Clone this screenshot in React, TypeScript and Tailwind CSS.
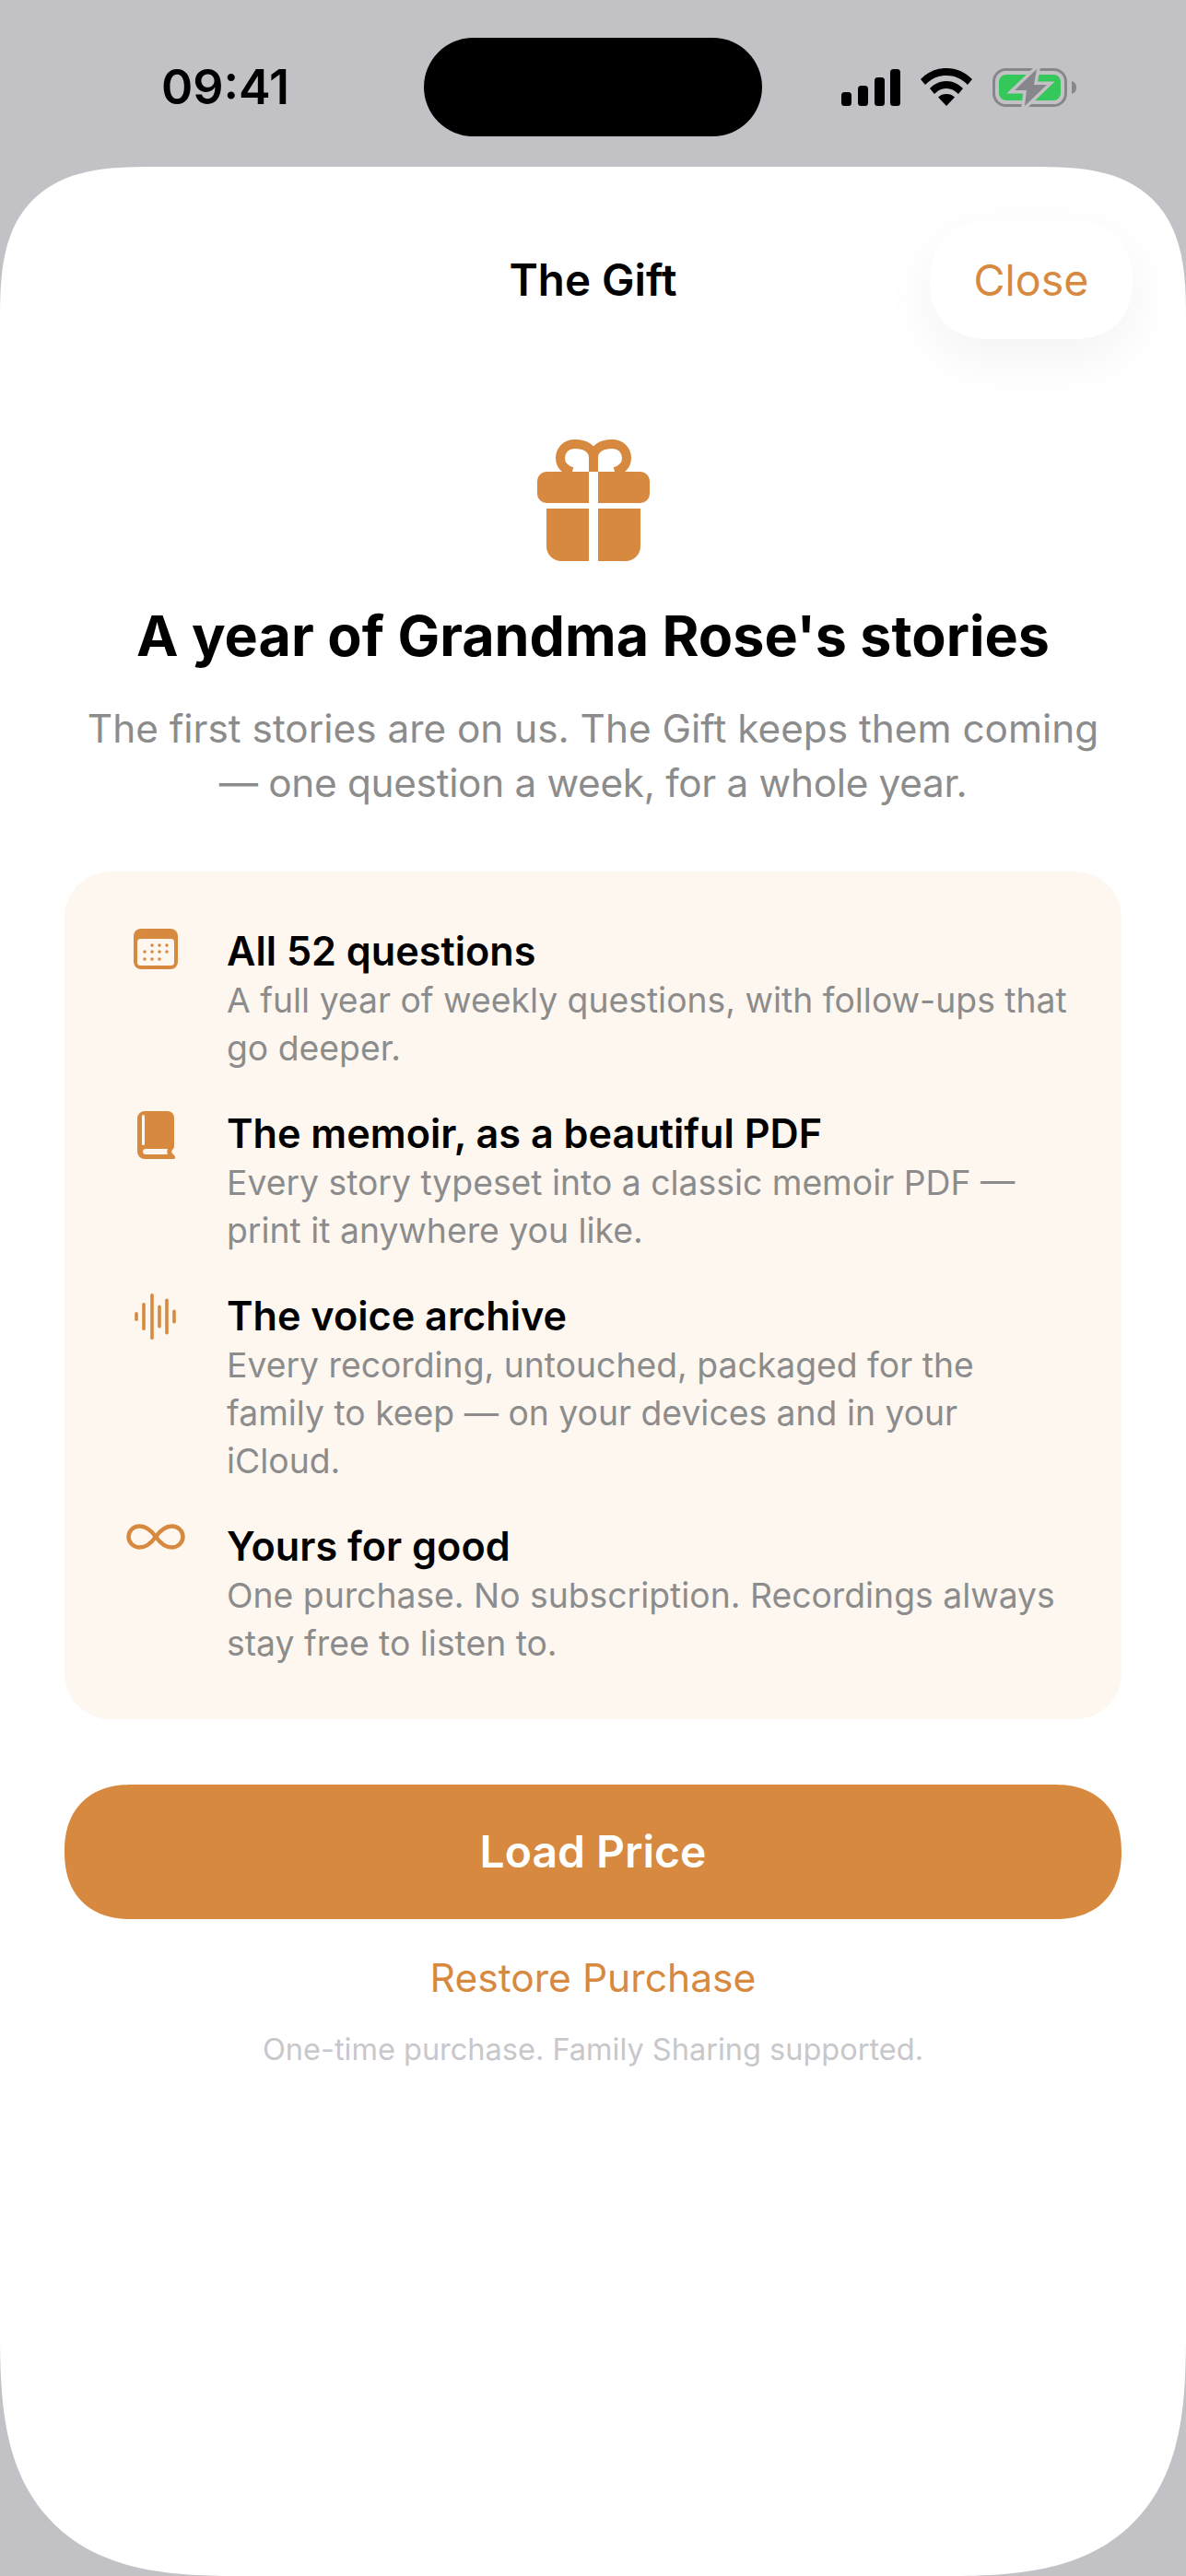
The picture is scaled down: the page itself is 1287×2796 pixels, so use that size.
const orange = '#d78a3f';

const features = [
  { icon: 'calendar', title: 'All 52 questions', lines: ['A full year of weekly questions, with follow-ups that', 'go deeper.'] },
  { icon: 'book', title: 'The memoir, as a beautiful PDF', lines: ['Every story typeset into a classic memoir PDF —', 'print it anywhere you like.'] },
  { icon: 'wave', title: 'The voice archive', lines: ['Every recording, untouched, packaged for the', 'family to keep — on your devices and in your', 'iCloud.'] },
  { icon: 'infinity', title: 'Yours for good', lines: ['One purchase. No subscription. Recordings always', 'stay free to listen to.'] },
];

function CalendarIcon() {
  const dots = [[20, 18], [28, 18], [36, 18], [12, 25], [20, 25], [28, 25], [36, 25], [12, 33], [20, 33], [28, 33]];
  return (
    <svg width="48" height="44" viewBox="0 0 48 44">
      <rect width="48" height="44" rx="8" fill={orange} />
      <rect x="4" y="11" width="40" height="29" rx="3.5" fill="#fef7f0" />
      {dots.map(([x, y]) => (
        <circle key={`${x}-${y}`} cx={x} cy={y} r="1.8" fill={orange} />
      ))}
    </svg>
  );
}

function BookIcon() {
  return (
    <svg width="41" height="52" viewBox="0 0 41 52">
      <path d="M8 0H33a7 7 0 0 1 7 7V38c0 2-1 3-2 4-1 1.500-1 3 .5 4.500L41 49c.5 1.500 0 3-2 3H8a8 8 0 0 1-8-8V8a8 8 0 0 1 8-8z" fill={orange} />
      <rect x="5" y="4" width="3" height="33" rx="1.500" fill="#fef7f0" />
      <path d="M9 41H33c-1 2-1 4 0 6H9a3 3 0 0 1 0-6z" fill="#fef7f0" />
    </svg>
  );
}

function WaveIcon() {
  const bars = [[2, 10], [10, 30], [19, 50], [27, 25], [35, 39], [43, 15]];
  return (
    <svg width="46" height="50" viewBox="0 0 46 50">
      {bars.map(([x, h]) => (
        <rect key={x} x={x - 1.8} y={25 - h / 2} width="3.600" height={h} rx="1.800" fill={orange} />
      ))}
    </svg>
  );
}

function InfinityIcon() {
  return (
    <svg width="64" height="28" viewBox="0 0 64 28" fill="none">
      <path d="M32 14C27 7 22 2.500 14.500 2.500 7.500 2.500 2.500 8 2.500 14s5 11.500 12 11.500C22 25.500 27 21 32 14s10-11.500 17.500-11.500c7 0 12 5.500 12 11.500s-5 11.500-12 11.500C42 25.500 37 21 32 14z" stroke={orange} strokeWidth="4.500" />
    </svg>
  );
}

function FeatureIcon({ name }: { name: string }) {
  if (name === 'calendar') return <CalendarIcon />;
  if (name === 'book') return <BookIcon />;
  if (name === 'wave') return <WaveIcon />;
  return <InfinityIcon />;
}

function GiftIcon() {
  return (
    <svg width="122" height="132" viewBox="0 0 122 132" fill="none">
      <path d="M61 35V20C61 10 52 5 41 5 31 5 25 12 25 20c0 8 5 13 13 15" stroke={orange} strokeWidth="10" />
      <path d="M61 35V20C61 10 70 5 81 5c10 0 16 7 16 15 0 8-5 13-13 15" stroke={orange} strokeWidth="10" />
      <path d="M10 35H56V69H10A10 10 0 0 1 0 59V45A10 10 0 0 1 10 35z" fill={orange} />
      <path d="M66 35H112a10 10 0 0 1 10 10V59a10 10 0 0 1-10 10H66z" fill={orange} />
      <path d="M10 75H56V132H26A16 16 0 0 1 10 116z" fill={orange} />
      <path d="M66 75H112V116a16 16 0 0 1-16 16H66z" fill={orange} />
    </svg>
  );
}

function StatusIcons() {
  return (
    <div className="flex items-center">
      <svg width="64" height="40" viewBox="0 0 64 40" fill="#000">
        <rect x="0" y="25" width="11" height="15" rx="3.500" />
        <rect x="18" y="18" width="11" height="22" rx="3.500" />
        <rect x="36" y="9" width="11" height="31" rx="3.500" />
        <rect x="53" y="0" width="11" height="40" rx="3.500" />
      </svg>
      <svg width="56" height="41" viewBox="0 0 56 41" className="ml-[22px]" fill="#000">
        <path d="M28 0C17 0 8 4 0 12l5 6C12 11 19 8 28 8s16 3 23 10l5-6C48 4 39 0 28 0z" />
        <path d="M28 14c-7 0-13 3-18 8l5 6c4-4 8-6 13-6s9 2 13 6l5-6c-5-5-11-8-18-8z" />
        <path d="M28 28c-3.500 0-6.500 1-9 3.500L28 41l9-9.500C34.500 29 31.500 28 28 28z" />
      </svg>
      <svg width="91" height="42" viewBox="0 0 91 42" className="ml-[22px]">
        <rect x="1.500" y="1.500" width="78" height="39" rx="13" fill="none" stroke="#87878b" strokeWidth="3" />
        <path d="M86 14c3 1 5 3 5 7s-2 6-5 7z" fill="#87878b" />
        <rect x="7" y="7" width="67" height="28" rx="8" fill="#34c759" />
        <path d="M48 1L24 24H37L35 41 59 18H45z" fill="#c2c1c6" stroke="#c2c1c6" strokeWidth="7" />
        <path d="M48 1L24 24H37L35 41 59 18H45z" fill="#87878b" />
      </svg>
    </div>
  );
}

export default function App() {
  return (
    <div className="flex h-[2796px] w-[1287px] flex-col overflow-hidden bg-[#c2c1c6] font-['Inter',sans-serif]">
      {/* status bar */}
      <div className="flex h-[181px] shrink-0 items-start pt-[41px]">
        <div className="flex h-[107px] w-[460px] items-center justify-end pr-[146px] text-[52px] font-semibold text-black">09:41</div>
        <div className="h-[107px] w-[367px] rounded-[54px] bg-black" />
        <div className="flex h-[107px] items-center pl-[86px]">
          <StatusIcons />
        </div>
      </div>

      {/* sheet */}
      <div className="flex flex-1 flex-col items-center rounded-t-[165px] rounded-b-[265px] bg-white px-[70px] [corner-shape:superellipse(1.5)]">
        <div className="relative mt-[59px] flex h-[128px] w-full items-center justify-center">
          <span className="text-[47.500px] leading-none font-semibold text-black">The Gift</span>
          <button className="absolute top-0 right-[-12px] flex h-[128px] w-[220px] items-center justify-center rounded-[64px] bg-white text-[46.500px] leading-none text-[#d78a3f] shadow-[0_20px_60px_rgba(0,0,0,0.05)] [corner-shape:superellipse(1.2)]">
            Close
          </button>
        </div>

        <div className="mt-[109px]">
          <GiftIcon />
        </div>

        <h1 className="mt-[45px] text-center text-[61px] leading-[72px] font-bold text-black">A year of Grandma Rose's stories</h1>
        <p className="mt-[35px] text-center text-[42.3px] leading-[59px] text-[#8c8c8c]">
          The first stories are on us. The Gift keeps them coming
          <br />
          <span className="tracking-[-0.3px]">— one question a week, for a whole year.</span>
        </p>

        <div className="mt-[67px] flex h-[920px] w-full flex-col gap-[38px] rounded-[50px] bg-[#fef7f0] pt-[58px] pr-[40px]">
          {features.map((f) => (
            <div key={f.title} className="flex">
              <div className="flex w-[176px] shrink-0 justify-center pt-[4px] pl-[22px]">
                <FeatureIcon name={f.icon} />
              </div>
              <div className="min-w-0">
                <div className="text-[43.200px] leading-[56px] font-semibold text-black">{f.title}</div>
                <div className="text-[37.300px] leading-[52px] text-[#8c8c8c]">
                  {f.lines.map((l) => (
                    <div key={l}>{l}</div>
                  ))}
                </div>
              </div>
            </div>
          ))}
        </div>

        <button className="mt-[71px] flex h-[146px] w-full shrink-0 items-center justify-center rounded-[73px] bg-[#d78a3f] text-[48px] font-semibold text-white [corner-shape:superellipse(1.2)]">
          Load Price
        </button>
        <div className="mt-[39px] text-[42.6px] leading-[50px] text-[#d78a3f]">Restore Purchase</div>
        <div className="mt-[33px] text-[32.5px] leading-[40px] text-[#c7c7cc]">One-time purchase. Family Sharing supported.</div>
      </div>
    </div>
  );
}
